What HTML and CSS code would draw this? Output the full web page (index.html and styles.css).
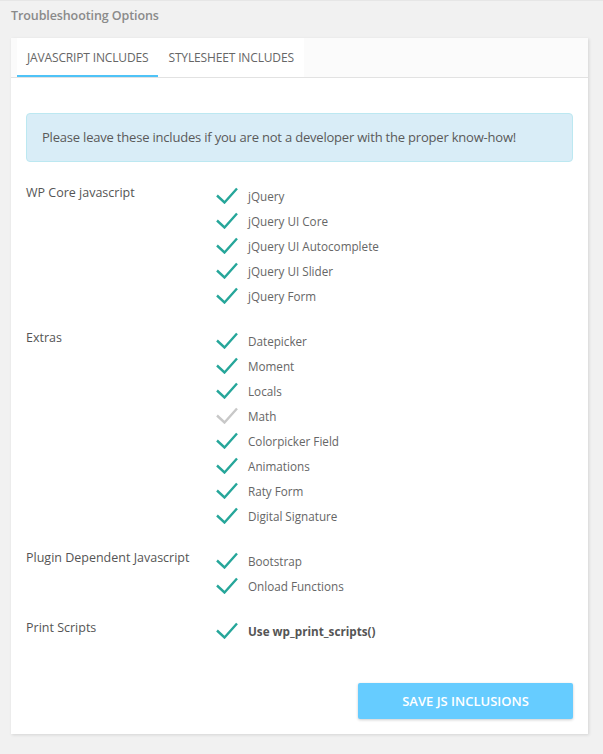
FILE: index.html
```html
<!DOCTYPE html>
<html>
<head>
<meta charset="utf-8">
<link rel="stylesheet" href="styles.css">
</head>
<body>
<div class="page">
  <h1 class="title">Troubleshooting Options</h1>
  <div class="card">
    <div class="tabs">
      <div class="tab active">JAVASCRIPT INCLUDES</div>
      <div class="tab">STYLESHEET INCLUDES</div>
      <div class="tab-fill"></div>
    </div>
    <div class="body">
      <div class="alert">Please leave these includes if you are not a developer with the proper know-how!</div>

      <div class="group">
        <div class="glabel">WP Core javascript</div>
        <ul class="items">
          <li><svg class="chk" viewBox="0 0 22 17"><path d="M1 8.5 L8.5 15.5 L21 1.5"/></svg>jQuery</li>
          <li><svg class="chk" viewBox="0 0 22 17"><path d="M1 8.5 L8.5 15.5 L21 1.5"/></svg>jQuery UI Core</li>
          <li><svg class="chk" viewBox="0 0 22 17"><path d="M1 8.5 L8.5 15.5 L21 1.5"/></svg>jQuery UI Autocomplete</li>
          <li><svg class="chk" viewBox="0 0 22 17"><path d="M1 8.5 L8.5 15.5 L21 1.5"/></svg>jQuery UI Slider</li>
          <li><svg class="chk" viewBox="0 0 22 17"><path d="M1 8.5 L8.5 15.5 L21 1.5"/></svg>jQuery Form</li>
        </ul>
      </div>

      <div class="group">
        <div class="glabel">Extras</div>
        <ul class="items">
          <li><svg class="chk" viewBox="0 0 22 17"><path d="M1 8.5 L8.5 15.5 L21 1.5"/></svg>Datepicker</li>
          <li><svg class="chk" viewBox="0 0 22 17"><path d="M1 8.5 L8.5 15.5 L21 1.5"/></svg>Moment</li>
          <li><svg class="chk" viewBox="0 0 22 17"><path d="M1 8.5 L8.5 15.5 L21 1.5"/></svg>Locals</li>
          <li><svg class="chk off" viewBox="0 0 22 17"><path d="M1 8.5 L8.5 15.5 L21 1.5"/></svg>Math</li>
          <li><svg class="chk" viewBox="0 0 22 17"><path d="M1 8.5 L8.5 15.5 L21 1.5"/></svg>Colorpicker Field</li>
          <li><svg class="chk" viewBox="0 0 22 17"><path d="M1 8.5 L8.5 15.5 L21 1.5"/></svg>Animations</li>
          <li><svg class="chk" viewBox="0 0 22 17"><path d="M1 8.5 L8.5 15.5 L21 1.5"/></svg>Raty Form</li>
          <li><svg class="chk" viewBox="0 0 22 17"><path d="M1 8.5 L8.5 15.5 L21 1.5"/></svg>Digital Signature</li>
        </ul>
      </div>

      <div class="group">
        <div class="glabel">Plugin Dependent Javascript</div>
        <ul class="items">
          <li><svg class="chk" viewBox="0 0 22 17"><path d="M1 8.5 L8.5 15.5 L21 1.5"/></svg>Bootstrap</li>
          <li><svg class="chk" viewBox="0 0 22 17"><path d="M1 8.5 L8.5 15.5 L21 1.5"/></svg>Onload Functions</li>
        </ul>
      </div>

      <div class="group">
        <div class="glabel">Print Scripts</div>
        <ul class="items">
          <li class="strong"><svg class="chk" viewBox="0 0 22 17"><path d="M1 8.5 L8.5 15.5 L21 1.5"/></svg>Use wp_print_scripts()</li>
        </ul>
      </div>

      <div class="actions">
        <button class="btn">SAVE JS INCLUSIONS</button>
      </div>
    </div>
  </div>
</div>
</body>
</html>
```
FILE: styles.css
```css
html, body {
  margin: 0;
  padding: 0;
  background: #f1f1f1;
}
body {
  font-family: "Open Sans", "Noto Sans", sans-serif;
  font-size: 12px;
  color: #555;
  box-shadow: inset 0 1px 0 #e6e6e6;
  min-height: 754px;
}
.page {
  padding: 6px 15px 0 11px;
}
.title {
  margin: 0;
  font-size: 12.5px;
  font-weight: 600;
  color: #8a8a8a;
  line-height: 20px;
  letter-spacing: -0.1px;
}
.card {
  margin-top: 12px;
  width: 577px;
  background: #fff;
  box-shadow: 1px 1px 3px rgba(0,0,0,0.12);
}
.tabs {
  display: flex;
  height: 39px;
  border-bottom: 1px solid #e2e2e2;
  background: #fbfbfb;
  padding-left: 6px;
}
.tab {
  background: #fff;
  padding: 0 10px;
  line-height: 39px;
  height: 39px;
  font-size: 12px;
  color: #666;
  letter-spacing: -0.15px;
  box-sizing: border-box;
}
.tab.active {
  border-bottom: 2px solid #4fc3f7;
}
.tab-fill { flex: 1; }
.body {
  padding: 35px 15px 15px 15px;
}
.alert {
  background: #d9edf7;
  border: 1px solid #bce8f1;
  border-radius: 4px;
  color: #5a5a5a;
  padding: 0 15px;
  height: 47px;
  line-height: 47px;
  font-size: 13px;
  letter-spacing: -0.2px;
  margin-bottom: 20px;
}
.group {
  display: flex;
  margin-bottom: 19px;
}
.glabel {
  width: 190px;
  line-height: 16px;
  font-size: 12.5px;
  color: #555;
  padding-top: 3px;
}
.items {
  list-style: none;
  margin: 0;
  padding: 1px 0 0 0;
}
.items li {
  display: flex;
  align-items: center;
  height: 25px;
  font-size: 11.7px;
  color: #666;
}
.items li.strong {
  font-weight: 700;
  color: #555;
}
.chk {
  width: 22px;
  height: 17px;
  margin-right: 10px;
  fill: none;
  stroke: #26a69a;
  stroke-width: 2.4;
}
.chk.off { stroke: #c8c8c8; }
.actions {
  display: flex;
  justify-content: flex-end;
  margin-top: 40px;
}
.btn {
  width: 215px;
  height: 36px;
  border: none;
  border-radius: 2px;
  background: #66ccff;
  color: #fff;
  font-family: "Open Sans", sans-serif;
  font-weight: 600;
  font-size: 13px;
  box-shadow: 0 1px 3px rgba(0,0,0,0.2);
}
```
